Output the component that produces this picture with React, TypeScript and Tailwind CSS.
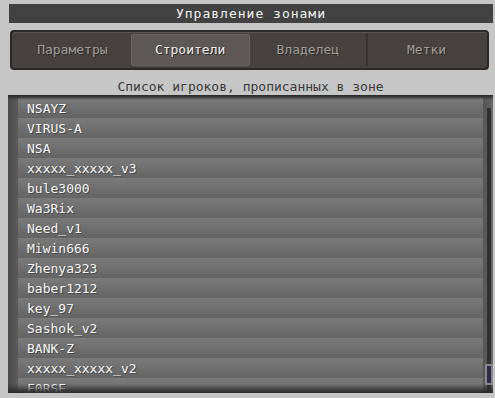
const players = [
  "NSAYZ",
  "VIRUS-A",
  "NSA",
  "xxxxx_xxxxx_v3",
  "bule3000",
  "Wa3Rix",
  "Need_v1",
  "Miwin666",
  "Zhenya323",
  "baber1212",
  "key_97",
  "Sashok_v2",
  "BANK-Z",
  "xxxxx_xxxxx_v2",
  "F0RSE",
];

const tabs = ["Параметры", "Строители", "Владелец", "Метки"];

export default function App() {
  return (
    <div
      className="w-[495px] h-[398px] overflow-hidden bg-[#c6c6c6] pt-[4px] pl-[8px] pr-[2px] flex flex-col"
      style={{ fontFamily: '"DejaVu Sans Mono", "Liberation Mono", monospace' }}
    >
      {/* title */}
      <div className="ml-[1px] h-[19px] bg-[#424242] flex items-center justify-center text-[13px] tracking-[1px] text-[#f2f2f2] leading-none">
        Управление зонами
      </div>

      {/* tabs */}
      <div className="mt-[7px] ml-[2px] mr-[4px] h-[40px] rounded-[4px] border-2 border-[#2b2827] bg-[#47423f] flex p-[2px] shadow-[inset_0_1px_0_#5a5552]">
        {tabs.map((t, i) => {
          const active = i === 1;
          return (
            <div
              key={t}
              className={
                active
                  ? "flex-1 flex items-center justify-center rounded-[2px] bg-[#5d5855] border border-[#6a6562] text-[13px] text-[#ececec] [text-shadow:1px_1px_0_#2e2a28]"
                  : i === 3
                  ? "flex-1 flex items-center justify-center bg-[#47423f] border-l-2 border-[#353130] text-[13px] text-[#a19d99] [text-shadow:1px_1px_0_#2e2a28]"
                  : "flex-1 flex items-center justify-center bg-[#47423f] text-[13px] text-[#a19d99] [text-shadow:1px_1px_0_#2e2a28]"
              }
            >
              {t}
            </div>
          );
        })}
      </div>

      {/* subtitle */}
      <div className="h-[25px] flex items-end justify-center pb-[2px] text-[13px] text-[#3a3a3a] leading-none">
        Список игроков, прописанных в зоне
      </div>

      {/* list panel */}
      <div className="relative h-[298px] bg-[#5c5c5c] flex overflow-hidden">
        <div className="w-[10px] bg-gradient-to-r from-[#4a4a4a] to-[#5c5c5c]" />
        <div className="w-[465px] pt-[3px] flex flex-col">
          {players.map((p) => (
            <div
              key={p}
              className="h-[20px] shrink-0 bg-gradient-to-b from-[#7a7a7a] to-[#646464] flex items-center pl-[9px] text-[13px] text-[#f4f4f4] leading-none [text-shadow:1px_1px_0_#4a4a4a]"
            >
              {p}
            </div>
          ))}
        </div>
        <div className="w-[4px] bg-[#585858]" />
        <div className="relative w-[4px] mt-[13px] bg-[#333230]" />
        <div className="w-[2px] bg-[#6a6a6a]" />

        {/* scrollbar thumb */}
        <div className="absolute left-[477px] top-[269px] w-[8px] h-[21px] bg-[#8a8a8a] p-[2px]">
          <div className="w-full h-full bg-[#2c2c4a]" />
        </div>

        {/* top / bottom shading */}
        <div className="absolute left-0 right-0 top-0 h-[5px] bg-gradient-to-b from-[#262626] to-transparent" />
        <div className="absolute left-0 right-0 bottom-0 h-[9px] bg-gradient-to-t from-[#2a2a2a] to-transparent" />
      </div>
    </div>
  );
}
